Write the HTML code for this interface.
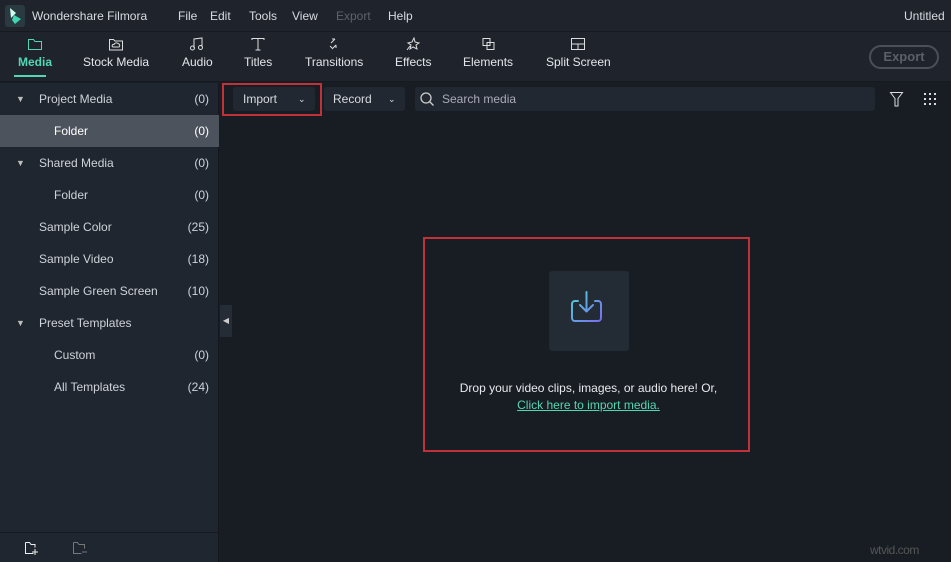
<!DOCTYPE html><html><head><style>
*{margin:0;padding:0;box-sizing:border-box}
body{width:951px;height:562px;background:#181d24;font-family:"Liberation Sans",sans-serif;color:#d8dbe0;font-size:12px;position:relative;overflow:hidden}
.abs{position:absolute}
#top{left:0;top:0;width:951px;height:32px;background:#1f242c;border-bottom:1px solid #151a20}
#tb{left:0;top:32px;width:951px;height:50px;background:#1f242c;border-bottom:1px solid #151a20}
.menu{top:9px;font-size:12px;color:#d8dbe0}
.tool{top:37px;text-align:center;font-size:12px;color:#e3e6ea}
.tool svg{display:block;margin:0 auto 4px}
#side{left:0;top:83px;width:219px;height:479px;background:#202630;border-right:1px solid #14181e}
.row{position:absolute;left:0;width:219px;height:32px;line-height:32px;font-size:12px;color:#cfd3d8}
.row .c{position:absolute;right:10px}
.tri{position:absolute;left:16px;font-size:9px;color:#bbb}
</style></head><body>
<div id="top" class="abs"></div>
<div class="abs" style="left:5px;top:5px;width:20px;height:22px;background:#2b3a40;border-radius:3px"></div>
<svg class="abs" style="left:8px;top:7px" width="14" height="18"><path d="M2 1 L8 6 L3 11 Z" fill="#cfe"/><path d="M6 8 L13 12 L7 17 L4 13Z" fill="#3fd6b5"/></svg>
<div class="abs menu" style="left:32px">Wondershare Filmora</div>
<div class="abs menu" style="left:178px">File</div>
<div class="abs menu" style="left:210px">Edit</div>
<div class="abs menu" style="left:249px">Tools</div>
<div class="abs menu" style="left:292px">View</div>
<div class="abs menu" style="left:336px;color:#5c636c">Export</div>
<div class="abs menu" style="left:388px">Help</div>
<div class="abs menu" style="left:904px">Untitled</div>
<div id="tb" class="abs"></div>
<div class="abs tool" style="left:17px;width:36px;color:#52d6b5;font-weight:bold"><svg width="16" height="14"><path d="M1.5 2.5h5l1.5 2h6.5v8h-13z" fill="none" stroke="#52d6b5"/></svg>Media</div>
<div class="abs" style="left:14px;top:75px;width:32px;height:2px;background:#52d6b5"></div>
<div class="abs tool" style="left:83px"><svg width="16" height="14"><path d="M1.5 2.5h4l1.5 1.5h7.5v9h-13z M5 10h6a2 2 0 0 0-1-3.5a2.5 2.5 0 0 0-4 1a1.3 1.3 0 0 0-1 2.5z" fill="none" stroke="#ddd"/></svg>Stock Media</div>
<div class="abs tool" style="left:182px"><svg width="16" height="14"><path d="M5 11V2l8-1v9" fill="none" stroke="#ddd"/><circle cx="3.5" cy="11" r="2" fill="none" stroke="#ddd"/><circle cx="11.5" cy="10.5" r="2" fill="none" stroke="#ddd"/></svg>Audio</div>
<div class="abs tool" style="left:244px"><svg width="16" height="14"><path d="M2 3V1.5h12V3M8 1.5V13M5.5 13h5" fill="none" stroke="#ddd"/></svg>Titles</div>
<div class="abs tool" style="left:305px"><svg width="16" height="14"><path d="M5 6l4-4M9 2h-3M6 12l4-4M10 8v3M4 9l2 2" fill="none" stroke="#ddd"/></svg>Transitions</div>
<div class="abs tool" style="left:395px"><svg width="16" height="14"><path d="M9 1l1 4 4 1-3 2 1 4-4-2-3 2 1-4-3-2 4-1z M5 9l-3 4" fill="none" stroke="#ddd"/></svg>Effects</div>
<div class="abs tool" style="left:463px"><svg width="16" height="14"><rect x="3" y="1.5" width="7" height="7" fill="none" stroke="#ddd"/><rect x="7" y="5.5" width="7" height="7" fill="none" stroke="#ddd"/></svg>Elements</div>
<div class="abs tool" style="left:546px"><svg width="16" height="14"><rect x="1.5" y="1.5" width="13" height="11" fill="none" stroke="#ddd"/><path d="M1.5 7h13M8 7v5.5" stroke="#ddd"/></svg>Split Screen</div>
<div class="abs" style="left:869px;top:45px;width:70px;height:24px;border:2px solid #4a5058;border-radius:12px;color:#5a6068;font-weight:bold;font-size:13px;text-align:center;line-height:20px">Export</div>
<div id="side" class="abs">
<div class="row" style="top:0"><span class="tri">▼</span><span style="margin-left:39px">Project Media</span><span class="c">(0)</span></div>
<div class="row" style="top:32px;background:#4c535c;color:#fff"><span style="margin-left:54px">Folder</span><span class="c">(0)</span></div>
<div class="row" style="top:64px"><span class="tri">▼</span><span style="margin-left:39px">Shared Media</span><span class="c">(0)</span></div>
<div class="row" style="top:96px"><span style="margin-left:54px">Folder</span><span class="c">(0)</span></div>
<div class="row" style="top:128px"><span style="margin-left:39px">Sample Color</span><span class="c">(25)</span></div>
<div class="row" style="top:160px"><span style="margin-left:39px">Sample Video</span><span class="c">(18)</span></div>
<div class="row" style="top:192px"><span style="margin-left:39px">Sample Green Screen</span><span class="c">(10)</span></div>
<div class="row" style="top:224px"><span class="tri">▼</span><span style="margin-left:39px">Preset Templates</span></div>
<div class="row" style="top:256px"><span style="margin-left:54px">Custom</span><span class="c">(0)</span></div>
<div class="row" style="top:288px"><span style="margin-left:54px">All Templates</span><span class="c">(24)</span></div>
<div class="abs" style="left:0;top:449px;width:219px;height:1px;background:#161a20"></div>
<svg class="abs" style="left:24px;top:458px" width="16" height="14"><path d="M1.5 1.5h4l1.5 2h4v3M1.5 1.5v11h8M11 8v6M8 11h6" fill="none" stroke="#eee"/></svg>
<svg class="abs" style="left:72px;top:458px" width="16" height="14"><path d="M1.5 1.5h4l1.5 2h5.5v4M1.5 1.5v11h8M10 11h5" fill="none" stroke="#777"/></svg>
</div>
<div class="abs" style="left:220px;top:305px;width:12px;height:32px;background:#262c35;color:#ccc;font-size:8px;line-height:32px;text-align:center">◀</div>
<div class="abs" style="left:222px;top:83px;width:100px;height:33px;border:2px solid #c0313a"></div>
<div class="abs" style="left:233px;top:87px;width:82px;height:24px;background:#222831;border-radius:3px;font-size:12px;line-height:24px;padding-left:10px">Import<span style="position:absolute;left:65px;font-size:9px">⌄</span></div>
<div class="abs" style="left:324px;top:87px;width:81px;height:24px;background:#222831;border-radius:3px;font-size:12px;line-height:24px;padding-left:9px">Record<span style="position:absolute;left:64px;font-size:9px">⌄</span></div>
<div class="abs" style="left:415px;top:87px;width:460px;height:24px;background:#222831;border-radius:3px;font-size:12px;line-height:24px;padding-left:27px;color:#aab">Search media</div>
<svg class="abs" style="left:419px;top:91px" width="16" height="16"><circle cx="7" cy="7" r="5" fill="none" stroke="#ccc" stroke-width="1.3"/><path d="M10.5 10.5l4 4" stroke="#ccc" stroke-width="1.3"/></svg>
<svg class="abs" style="left:889px;top:91px" width="16" height="16"><path d="M1.5 1.5h12l-4.5 6v7.5h-3V7.5z" fill="none" stroke="#ddd"/></svg>
<svg class="abs" style="left:924px;top:93px" width="14" height="12"><g fill="#ddd"><rect x="0" y="0" width="2" height="2"/><rect x="5" y="0" width="2" height="2"/><rect x="10" y="0" width="2" height="2"/><rect x="0" y="5" width="2" height="2"/><rect x="5" y="5" width="2" height="2"/><rect x="10" y="5" width="2" height="2"/><rect x="0" y="10" width="2" height="2"/><rect x="5" y="10" width="2" height="2"/><rect x="10" y="10" width="2" height="2"/></g></svg>
<div class="abs" style="left:423px;top:237px;width:327px;height:215px;border:2px solid #c0313a"></div>
<div class="abs" style="left:549px;top:271px;width:80px;height:80px;background:#232b35;border-radius:3px"></div>
<svg class="abs" style="left:570px;top:290px" width="38" height="42"><defs><linearGradient id="g" x1="0" x2="1" y1="0" y2="1"><stop offset="0" stop-color="#4ad6d6"/><stop offset="1" stop-color="#7a6cf0"/></linearGradient></defs><path d="M8 11H5a3 3 0 0 0-3 3v14a3 3 0 0 0 3 3h23a3 3 0 0 0 3-3V14a3 3 0 0 0-3-3h-3M16.5 2v19M10 15l6.5 6.5L23 15" fill="none" stroke="url(#g)" stroke-width="2" stroke-linecap="round" stroke-linejoin="round"/></svg>
<div class="abs" style="left:423px;top:381px;width:331px;text-align:center;font-size:12px;color:#e8eaed">Drop your video clips, images, or audio here! Or,</div>
<div class="abs" style="left:423px;top:398px;width:331px;text-align:center;font-size:12px;color:#52d6b5;text-decoration:underline">Click here to import media.</div>
<div class="abs" style="left:870px;top:543px;font-size:12px;color:#555;letter-spacing:-0.5px">wtvid.com</div>
</body></html>
